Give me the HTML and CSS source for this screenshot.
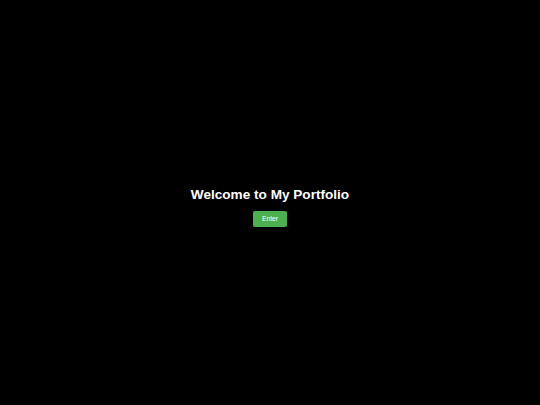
FILE: index.html
```html
<!DOCTYPE html>
<html>
<head>
<meta charset="utf-8">
<link rel="stylesheet" href="styles.css">
</head>
<body>
<main class="intro">
  <h1 class="title">Welcome to My Portfolio</h1>
  <button class="enter">Enter</button>
</main>
</body>
</html>
```
FILE: styles.css
```css
html, body {
  margin: 0;
  padding: 0;
  background: #000;
  height: 100%;
}
.intro {
  box-sizing: border-box;
  height: 100%;
  padding-top: 9px;
  display: flex;
  flex-direction: column;
  align-items: center;
  justify-content: center;
  font-family: "Liberation Sans", Arial, sans-serif;
  color: #fff;
}
.title {
  margin: 0 0 8.4px 0;
  font-size: 13.6px;
  font-weight: bold;
  line-height: 16px;
}
.enter {
  background: #4caf50;
  color: #fff;
  border: none;
  border-radius: 2px;
  font-family: "Liberation Sans", Arial, sans-serif;
  font-size: 6.7px;
  padding: 0 9.5px;
  height: 16px;
  line-height: 16px;
}
```
